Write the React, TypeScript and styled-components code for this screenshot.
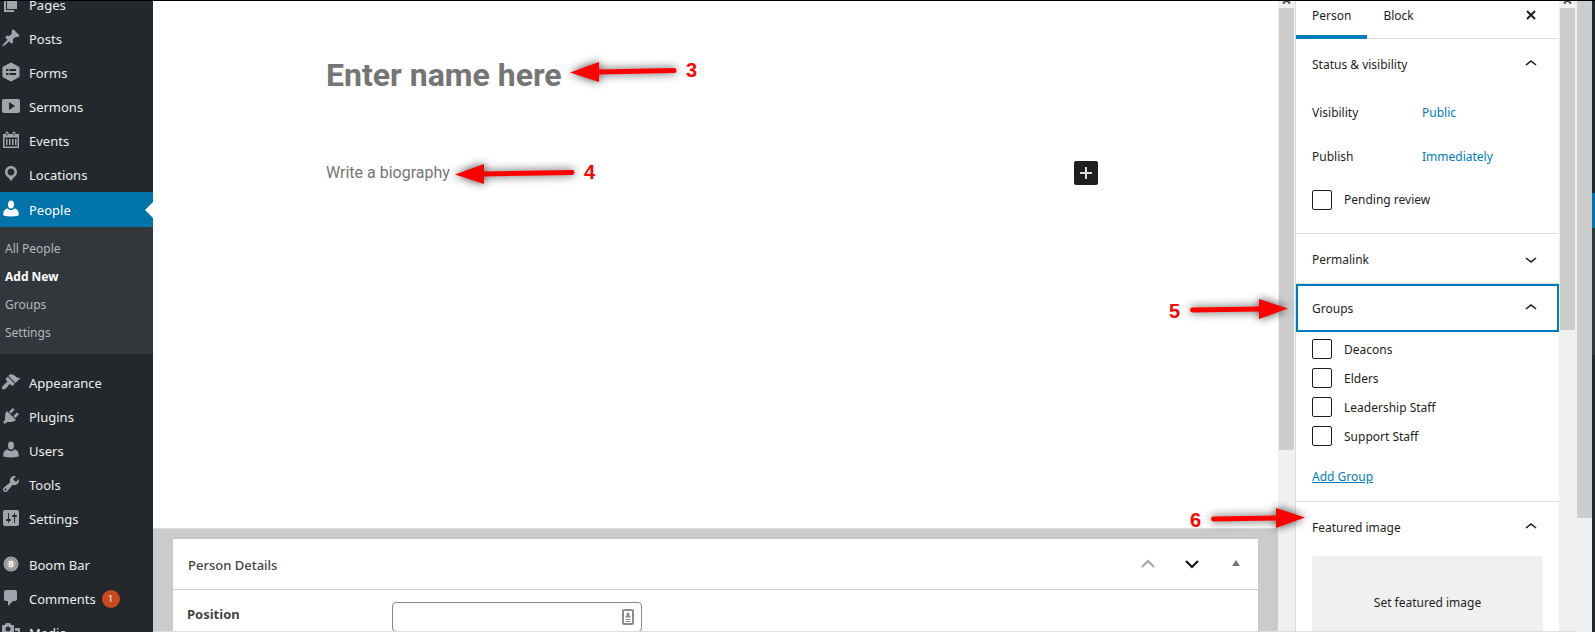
import React from 'react';
import styled, { createGlobalStyle, css } from 'styled-components';

const UI_FONT = '"Noto Sans", "Open Sans", sans-serif';

const GlobalStyle = createGlobalStyle`
  *, *::before, *::after { box-sizing: border-box; }
  body { margin: 0; background: #fff; font-family: ${UI_FONT}; font-size: 12px; color: #1e1e1e; }
  button, input { font: inherit; color: inherit; }
  button { margin: 0; padding: 0; border: 0; background: none; cursor: pointer; }
  ul, h1, h2, p { margin: 0; padding: 0; list-style: none; }
`;

const Page = styled.div`
  position: relative;
  display: flex;
  height: 100vh;
  overflow: hidden;
  border-top: 1px solid #000;
`;

/* ---------- admin menu ---------- */

const AdminMenu = styled.nav`
  flex: 0 0 153px;
  overflow: hidden;
  background: #23282d;
`;

const MenuGroup = styled.ul<{ $first?: boolean }>`
  margin-top: ${p => (p.$first ? '-13px' : '12px')};
`;

const MenuLink = styled.a<{ $active?: boolean }>`
  position: relative;
  display: flex;
  align-items: center;
  gap: 8px;
  height: 34px;
  padding-left: 1px;
  font-size: 13px;
  line-height: 18px;
  color: #eee;
  text-decoration: none;
  svg { flex: none; margin-bottom: 2px; fill: #a0a5aa; }
  ${p => p.$active && css`
    height: 35px;
    background: #0073aa;
    color: #fff;
    svg { fill: #fff; }
    &::after {
      content: '';
      position: absolute;
      right: 0;
      top: 10px;
      border: 8px solid transparent;
      border-left: 0;
      border-right-color: #fff;
    }
  `}
`;

const Badge = styled.span`
  width: 18px;
  height: 18px;
  margin-left: -2px;
  border-radius: 9px;
  background: #ca4a1f;
  color: #fff;
  font-size: 9px;
  line-height: 18px;
  text-align: center;
`;

const SubMenu = styled.ul`
  padding: 8px 0 7px;
  background: #32373c;
`;

const SubLink = styled.a<{ $current?: boolean }>`
  display: block;
  padding-left: 5px;
  font-size: 12px;
  line-height: 28px;
  font-weight: ${p => (p.$current ? 700 : 400)};
  color: ${p => (p.$current ? '#fff' : '#b4b9be')};
  text-decoration: none;
`;

const icons = {
  pages: <path d="M6 15V2h10v13H6zm-1 1h8v2H3V5h2v11z" />,
  posts: <path d="M10.44 3.02l1.82-1.82 6.36 6.35-1.83 1.82c-1.05-.68-2.48-.57-3.41.36l-.75.75c-.92.93-1.04 2.35-.35 3.41l-1.83 1.82-2.41-2.41-2.8 2.79c-.42.42-3.38 2.71-3.8 2.29s1.86-3.39 2.28-3.81l2.79-2.79L4.1 9.36l1.83-1.82c1.05.69 2.48.57 3.4-.36l.75-.75c.93-.92 1.05-2.35.36-3.41z" />,
  forms: (
    <>
      <path d="M8.9.9q1.1-.6 2.2 0l6.4 3.6q1.1.6 1.1 1.8v7.4q0 1.2-1.1 1.8l-6.4 3.6q-1.1.6-2.2 0l-6.400-3.600q-1.100-.6-1.100-1.800v-7.400q0-1.200 1.100-1.800z" />
      <path fill="#23282d" d="M5 7h2.500v2H5zM8.500 7h6.500v2h-6.500zM5 11h2.500v2H5zM8.500 11h6.500v2h-6.500z" />
    </>
  ),
  sermons: <path fillRule="evenodd" d="M19 15V5c0-1.100-.9-2-2-2H3c-1.100 0-2 .9-2 2v10c0 1.100.9 2 2 2h14c1.100 0 2-.9 2-2zM8 14V6l6 4z" />,
  events: (
    <path fillRule="evenodd" d="M2 4h2.500V3a1.500 1.500 0 0 1 3 0v1h4V3a1.500 1.500 0 0 1 3 0v1H18v14H2zM3.500 7.500v9h13v-9zM5 9h1.500v6H5zM8 9h1.500v6H8zM11 9h1.500v6H11zM14 9h1.500v6H14zM5.500 3v2.500h1V3zM12.500 3v2.500h1V3z" />
  ),
  locations: <path fillRule="evenodd" d="M10 2C6.690 2 4 4.690 4 8c0 2.020 1.170 3.710 2.530 4.890.43.37 1.180.96 1.850 1.830.74.97 1.410 2.010 1.620 2.710.21-.7.88-1.740 1.620-2.710.67-.87 1.420-1.460 1.850-1.830C14.830 11.710 16 10.020 16 8c0-3.310-2.690-6-6-6zm0 2.560c1.900 0 3.440 1.540 3.440 3.440S11.900 11.440 10 11.440 6.560 9.900 6.560 8 8.100 4.560 10 4.560z" />,
  person: (
    <>
      <ellipse cx="10" cy="5.500" rx="3" ry="4" />
      <path d="M7 9.500C7.500 11.500 12.500 11.500 13 9.500C15.800 9.500 17.700 11.500 17.700 14.500V16.500Q10 18.700 2.300 16.500V14.500C2.300 11.500 4.200 9.500 7 9.500z" />
    </>
  ),
  appearance: <path d="M14.480 11.060L7.410 3.990l1.500-1.500c.5-.56 2.300-.47 3.510.32 1.210.8 1.430 1.280 2.910 2.100 1.180.64 2.450 1.260 4.450.85zm-.71.71L6.700 4.700 4.930 6.470c-.39.39-.39 1.020 0 1.410l1.060 1.060c.39.39.39 1.030 0 1.420-.6.6-1.430 1.110-2.210 1.690-.35.26-.7.53-1.010.84C1.430 14.230.4 16.080 1.400 17.070c.99 1 2.840-.03 4.180-1.360.31-.31.58-.66.85-1.020.57-.78 1.080-1.610 1.690-2.210.39-.39 1.020-.39 1.410 0l1.060 1.060c.39.39 1.020.39 1.410 0z" />,
  plugins: <path d="M13.110 4.360L9.870 7.600 8 5.730l3.240-3.240c.35-.34 1.050-.2 1.560.32.52.51.66 1.210.31 1.550zm-8 1.770l.91-1.120 9.010 9.010-1.190.84c-.71.71-2.630 1.160-3.820 1.160H6.140L4.900 17.260c-.59.59-1.540.59-2.120 0-.59-.58-.59-1.530 0-2.120l1.240-1.240v-3.880c0-1.130.4-3.190 1.090-3.890zm7.260 3.970l3.240-3.240c.34-.35 1.040-.21 1.550.31.52.51.66 1.210.31 1.550l-3.240 3.250z" />,
  tools: <path d="M16.680 9.770c-1.340 1.340-3.300 1.670-4.950.99l-5.410 6.520c-.99.99-2.590.99-3.580 0s-.99-2.590 0-3.570l6.520-5.420c-.68-1.650-.35-3.610.99-4.950 1.280-1.280 3.120-1.620 4.720-1.060l-2.890 2.890 2.820 2.820 2.860-2.870c.53 1.580.18 3.390-1.080 4.650zM3.810 16.210c.4.39 1.040.39 1.430 0 .4-.4.4-1.040 0-1.430-.39-.4-1.030-.4-1.430 0-.39.39-.39 1.030 0 1.430z" />,
  settings: <path d="M18 16V4c0-1.100-.9-2-2-2H4c-1.100 0-2 .9-2 2v12c0 1.100.9 2 2 2h12c1.100 0 2-.9 2-2zM8 11h1c.55 0 1 .45 1 1s-.45 1-1 1H8v1.500c0 .28-.22.5-.5.5s-.5-.22-.5-.5V13H6c-.55 0-1-.45-1-1s.45-1 1-1h1V5.500c0-.28.22-.5.5-.5s.5.22.5.5V11zm5-2h-1c-.55 0-1-.45-1-1s.45-1 1-1h1V5.500c0-.28.22-.5.5-.5s.5.22.5.5V7h1c.55 0 1 .45 1 1s-.45 1-1 1h-1v5.500c0 .28-.22.5-.5.5s-.5-.22-.5-.5V9z" />,
  boom: (
    <>
      <circle cx="10" cy="10" r="7.500" />
      <circle cx="10" cy="10" r="5.500" fill="#aaa" stroke="#8a8a8a" />
      <text x="10" y="13" fill="#fff" fontSize="8" fontWeight="700" textAnchor="middle">B</text>
    </>
  ),
  comments: <path d="M5 2h9c1.100 0 2 .9 2 2v7c0 1.100-.9 2-2 2h-2l-5 5v-5H5c-1.100 0-2-.9-2-2V4c0-1.100.9-2 2-2z" />,
  media: <path d="M13 11V4c0-.55-.45-1-1-1h-1.670L9 1H5L3.670 3H2c-.55 0-1 .45-1 1v7c0 .55.45 1 1 1h10c.55 0 1-.45 1-1zM7 4.500c1.380 0 2.500 1.120 2.500 2.500S8.380 9.500 7 9.500 4.500 8.380 4.500 7 5.620 4.500 7 4.500zM14 6h5v10.500c0 1.380-1.120 2.500-2.500 2.500S14 17.880 14 16.500s1.120-2.500 2.500-2.500c.17 0 .34.02.5.05V9h-3V6zm-4 8.050V13h2v3.500c0 1.380-1.120 2.500-2.500 2.500S7 17.880 7 16.500 8.120 14 9.500 14c.17 0 .34.02.5.05z" />,
};

type IconName = keyof typeof icons;

function MenuItem({ icon, label, active, badge, children }: {
  icon: IconName; label: string; active?: boolean; badge?: string; children?: React.ReactNode;
}) {
  return (
    <li>
      <MenuLink href="#" $active={active}>
        <svg width="20" height="20" viewBox="0 0 20 20" aria-hidden="true">{icons[icon]}</svg>
        {label}
        {badge && <Badge>{badge}</Badge>}
      </MenuLink>
      {children}
    </li>
  );
}

/* ---------- scroll bars ---------- */

const Track = styled.div<{ $inset?: boolean }>`
  flex: 0 0 ${p => (p.$inset ? '17px' : '16px')};
  display: flex;
  flex-direction: column;
  padding: 0 ${p => (p.$inset ? '1px' : '0')} 0 1px;
  background: #f0f0f0;
  svg { flex: none; display: block; }
`;

const Thumb = styled.div<{ $share: number }>`
  flex: 0 0 ${p => p.$share}%;
  background: #cdcdcd;
`;

function ScrollBar({ share, arrow }: { share: number; arrow?: boolean }) {
  return (
    <Track $inset={arrow} aria-hidden="true">
      {arrow && (
        <svg width="15" height="7" viewBox="0 0 15 7">
          <path d="M4 2.500L7.500-1L11 2.500" fill="none" stroke="#505050" strokeWidth="2" />
        </svg>
      )}
      <Thumb $share={share} />
    </Track>
  );
}

/* ---------- editor ---------- */

const Editor = styled.main`
  flex: 1;
  min-width: 0;
  display: flex;
  flex-direction: column;
`;

const Canvas = styled.section`
  flex: 1;
  min-height: 0;
  overflow: hidden;
  padding: 52px 7px 0 0;
`;

const Column = styled.div`
  max-width: 772px;
  margin: 0 auto;
`;

const Title = styled.h1`
  font-family: Roboto, sans-serif;
  font-size: 32px;
  line-height: 44px;
  font-weight: 700;
  color: #757575;
`;

const BlockRow = styled.div`
  display: flex;
  align-items: center;
  justify-content: space-between;
  margin-top: 64px;
`;

const Prompt = styled.p`
  font-family: Roboto, sans-serif;
  font-size: 16px;
  line-height: 24px;
  color: #757575;
`;

const Inserter = styled.button`
  width: 24px;
  height: 24px;
  border-radius: 2px;
  background: #1e1e1e;
  svg { display: block; }
`;

const MetaArea = styled.section`
  flex: none;
  padding: 10px 20px 0;
  border-top: 1px solid #ddd;
  background: #cbcbcb;
`;

const MetaBox = styled.div`
  background: #fff;
`;

const MetaHeader = styled.header`
  display: flex;
  align-items: center;
  height: 51px;
  padding: 0 12px 0 15px;
  border-bottom: 1px solid #ccd0d4;
`;

const MetaTitle = styled.h2`
  flex: 1;
  padding-top: 2px;
  font-size: 13px;
  line-height: 20px;
  font-weight: 500;
  color: #444;
`;

const MetaButton = styled.button`
  width: 20px;
  height: 24px;
  margin-left: 24px;
  svg { display: block; }
`;

const MetaRow = styled.div`
  display: flex;
  height: 42px;
  padding-left: 14px;
  overflow: hidden;
`;

const MetaLabel = styled.label`
  flex: 0 0 205px;
  padding-top: 15px;
  font-size: 13px;
  line-height: 18px;
  font-weight: 700;
  color: #444;
`;

const FieldWrap = styled.div`
  position: relative;
  width: 250px;
  margin-top: 12px;
  svg { position: absolute; right: 8px; top: 7px; }
`;

const TextField = styled.input`
  display: block;
  width: 100%;
  height: 30px;
  padding: 0 32px 0 8px;
  border: 1px solid #7e8993;
  border-radius: 4px;
  background: #fff;
`;

/* ---------- settings panel ---------- */

const Settings = styled.aside`
  flex: 0 0 264px;
  overflow: hidden;
  border-left: 1px solid #ddd;
  background: #fff;
`;

const Tabs = styled.div`
  display: flex;
  height: 38px;
  padding-right: 16px;
  border-bottom: 1px solid #ddd;
`;

const Tab = styled.button<{ $selected?: boolean }>`
  height: 38px;
  padding: 0 16px 4px;
  font-size: 12px;
  line-height: 18px;
  border-bottom: 4px solid ${p => (p.$selected ? '#007cba' : 'transparent')};
`;

const CloseButton = styled.button`
  width: 24px;
  height: 28px;
  margin-left: auto;
  svg { display: block; }
`;

const Panel = styled.section`
  border-bottom: 1px solid #ddd;
`;

const PanelToggle = styled.button<{ $focused?: boolean }>`
  display: flex;
  align-items: center;
  justify-content: space-between;
  width: 100%;
  height: ${p => (p.$focused ? '48px' : '49px')};
  padding: 2px 16px 0;
  line-height: 18px;
  text-align: left;
  box-shadow: ${p => (p.$focused ? 'inset 0 0 0 2px #007cba' : 'none')};
  svg { margin-bottom: 2px; }
`;

const PanelBody = styled.div`
  padding: 0 16px;
`;

const SettingRow = styled.div`
  display: flex;
  align-items: center;
  height: 44px;
  line-height: 18px;
`;

const SettingName = styled.span`
  flex: 0 0 110px;
`;

const TextButton = styled.button`
  color: #007cba;
`;

const Check = styled.label`
  display: flex;
  align-items: center;
  gap: 12px;
  height: 29px;
  line-height: 18px;
  span { padding-top: 3px; }
`;

const Box = styled.input`
  appearance: none;
  flex: none;
  width: 20px;
  height: 20px;
  margin: 0;
  border: 1px solid #1e1e1e;
  border-radius: 2px;
  background: #fff;
`;

const StatusBody = styled(PanelBody)`
  padding-top: 3px;
  padding-bottom: 13px;
  ${Check} { height: 41px; }
  ${Check} span { padding-top: 1px; }
`;

const GroupsBody = styled(PanelBody)`
  padding-top: 2px;
  padding-bottom: 15px;
`;

const AddLink = styled.a`
  display: block;
  width: fit-content;
  margin-top: 18px;
  line-height: 18px;
  color: #007cba;
`;

const FeaturedButton = styled.button`
  width: 100%;
  margin-top: 5px;
  padding: 38px 8px;
  border-radius: 2px;
  background: #f0f0f0;
  line-height: 18px;
`;

/* ---------- far edge of the window ---------- */

const Edge = styled.div`
  flex: 0 0 3px;
  display: flex;
  flex-direction: column;
  background: #23282d;
  &::before { content: ''; height: 35px; margin-top: 192px; background: #0073aa; }
  &::after { content: ''; height: 127px; background: #32373c; }
`;

const BottomRule = styled.div`
  position: absolute;
  left: 153px;
  right: 18px;
  bottom: 0;
  height: 1px;
  background: #ddd;
`;

/* ---------- callouts over the page ---------- */

const Callout = styled.div<{ $top: number; $left?: number; $right?: number }>`
  position: absolute;
  top: ${p => p.$top}px;
  ${p => (p.$left !== undefined
    ? `left: ${p.$left}px; align-items: flex-end;`
    : `right: ${p.$right}px; align-items: flex-start;`)}
  display: flex;
  gap: 10px;
  color: #f00;
  font-family: "Liberation Sans", Arial, sans-serif;
  font-size: 20px;
  line-height: 24px;
  font-weight: 700;
  pointer-events: none;
  svg { display: block; overflow: visible; filter: drop-shadow(0 0 5px rgba(0, 0, 0, 0.75)); }
`;

function Arrow({ length, flip }: { length: number; flip?: boolean }) {
  return (
    <svg width={length} height="20" viewBox={`0 0 ${length} 20`} aria-hidden="true">
      {flip ? (
        <>
          <path d={`M${length} 9.500L${length - 29} 0v20z`} fill="#f00" />
          <path d={`M2.500 11L${length - 28} 10`} stroke="#f00" strokeWidth="5" strokeLinecap="round" />
        </>
      ) : (
        <>
          <path d="M0 10.500L29 0v20z" fill="#f00" />
          <path d={`M28 10L${length - 2} 8.500`} stroke="#f00" strokeWidth="5" strokeLinecap="round" />
        </>
      )}
    </svg>
  );
}

function Chevron({ down }: { down?: boolean }) {
  return (
    <svg width="24" height="24" viewBox="0 0 24 24" fill="#1e1e1e" aria-hidden="true">
      <path d={down
        ? 'M17.500 11.600L12 16l-5.500-4.400.9-1.200L12 14l4.500-3.600 1 1.200z'
        : 'M6.500 12.400L12 8l5.500 4.400-.9 1.200L12 10l-4.500 3.600-1-1.200z'} />
    </svg>
  );
}

function PanelHeader({ title, open, focused }: { title: string; open?: boolean; focused?: boolean }) {
  return (
    <PanelToggle type="button" aria-expanded={!!open} $focused={focused}>
      {title}
      <Chevron down={!open} />
    </PanelToggle>
  );
}

function CheckRow({ label }: { label: string }) {
  return (
    <Check>
      <Box type="checkbox" />
      <span>{label}</span>
    </Check>
  );
}

const groups = ['Deacons', 'Elders', 'Leadership Staff', 'Support Staff'];

export default function App() {
  return (
    <>
      <GlobalStyle />
      <Page>
        <AdminMenu aria-label="Main menu">
          <MenuGroup $first>
            <MenuItem icon="pages" label="Pages" />
            <MenuItem icon="posts" label="Posts" />
            <MenuItem icon="forms" label="Forms" />
            <MenuItem icon="sermons" label="Sermons" />
            <MenuItem icon="events" label="Events" />
            <MenuItem icon="locations" label="Locations" />
            <MenuItem icon="person" label="People" active>
              <SubMenu>
                <li><SubLink href="#">All People</SubLink></li>
                <li><SubLink href="#" $current>Add New</SubLink></li>
                <li><SubLink href="#">Groups</SubLink></li>
                <li><SubLink href="#">Settings</SubLink></li>
              </SubMenu>
            </MenuItem>
          </MenuGroup>
          <MenuGroup>
            <MenuItem icon="appearance" label="Appearance" />
            <MenuItem icon="plugins" label="Plugins" />
            <MenuItem icon="person" label="Users" />
            <MenuItem icon="tools" label="Tools" />
            <MenuItem icon="settings" label="Settings" />
          </MenuGroup>
          <MenuGroup>
            <MenuItem icon="boom" label="Boom Bar" />
            <MenuItem icon="comments" label="Comments" badge="1" />
            <MenuItem icon="media" label="Media" />
          </MenuGroup>
        </AdminMenu>

        <Editor>
          <Canvas>
            <Column>
              <Title>Enter name here</Title>
              <BlockRow>
                <Prompt>Write a biography</Prompt>
                <Inserter type="button" aria-label="Add block">
                  <svg width="24" height="24" viewBox="0 0 24 24" aria-hidden="true">
                    <path d="M12 6v12M6 12h12" stroke="#ddd" strokeWidth="2" />
                  </svg>
                </Inserter>
              </BlockRow>
            </Column>
          </Canvas>
          <MetaArea>
            <MetaBox>
              <MetaHeader>
                <MetaTitle>Person Details</MetaTitle>
                <MetaButton type="button" aria-label="Move up">
                  <svg width="20" height="24" viewBox="0 0 20 24" fill="none" aria-hidden="true">
                    <path d="M4 15l6-6 6 6" stroke="#a0a5aa" strokeWidth="2" />
                  </svg>
                </MetaButton>
                <MetaButton type="button" aria-label="Move down">
                  <svg width="20" height="24" viewBox="0 0 20 24" fill="none" aria-hidden="true">
                    <path d="M4 9l6 6 6-6" stroke="#111" strokeWidth="2" />
                  </svg>
                </MetaButton>
                <MetaButton type="button" aria-label="Toggle panel">
                  <svg width="20" height="24" viewBox="0 0 20 24" aria-hidden="true">
                    <path d="M6 14l4-6 4 6z" fill="#72777c" />
                  </svg>
                </MetaButton>
              </MetaHeader>
              <MetaRow>
                <MetaLabel htmlFor="position">Position</MetaLabel>
                <FieldWrap>
                  <TextField id="position" type="text" />
                  <svg width="12" height="16" viewBox="0 0 12 16" aria-hidden="true">
                    <rect x="1" y="1" width="10" height="14" rx="1" fill="#fff" stroke="#8c8c8c" strokeWidth="2" />
                    <path d="M6 3l1.500 2v2h1v1.500h-5V7h1V5zM3.500 10h5v1h-5zM3.500 12h5v1h-5z" fill="#8c8c8c" />
                  </svg>
                </FieldWrap>
              </MetaRow>
            </MetaBox>
          </MetaArea>
        </Editor>
        <ScrollBar share={70} arrow />

        <Settings>
          <Tabs>
            <Tab type="button" $selected>Person</Tab>
            <Tab type="button">Block</Tab>
            <CloseButton type="button" aria-label="Close settings">
              <svg width="24" height="24" viewBox="0 0 24 24" aria-hidden="true">
                <path d="M8 8l8 8M16 8l-8 8" stroke="#1e1e1e" strokeWidth="2" />
              </svg>
            </CloseButton>
          </Tabs>
          <Panel>
            <PanelHeader title="Status &amp; visibility" open />
            <StatusBody>
              <SettingRow>
                <SettingName>Visibility</SettingName>
                <TextButton type="button">Public</TextButton>
              </SettingRow>
              <SettingRow>
                <SettingName>Publish</SettingName>
                <TextButton type="button">Immediately</TextButton>
              </SettingRow>
              <CheckRow label="Pending review" />
            </StatusBody>
          </Panel>
          <Panel>
            <PanelHeader title="Permalink" />
          </Panel>
          <Panel>
            <PanelHeader title="Groups" open focused />
            <GroupsBody>
              {groups.map(name => <CheckRow key={name} label={name} />)}
              <AddLink href="#">Add Group</AddLink>
            </GroupsBody>
          </Panel>
          <Panel>
            <PanelHeader title="Featured image" open />
            <PanelBody>
              <FeaturedButton type="button">Set featured image</FeaturedButton>
            </PanelBody>
          </Panel>
        </Settings>
        <ScrollBar share={51} arrow />
        <ScrollBar share={82} />
        <Edge />
        <BottomRule />

        <Callout $top={57} $left={570}><Arrow length={106} />3</Callout>
        <Callout $top={159} $left={455}><Arrow length={119} />4</Callout>
        <Callout $top={298} $right={307}>5<Arrow length={98} flip /></Callout>
        <Callout $top={507} $right={290}>6<Arrow length={94} flip /></Callout>
      </Page>
    </>
  );
}
